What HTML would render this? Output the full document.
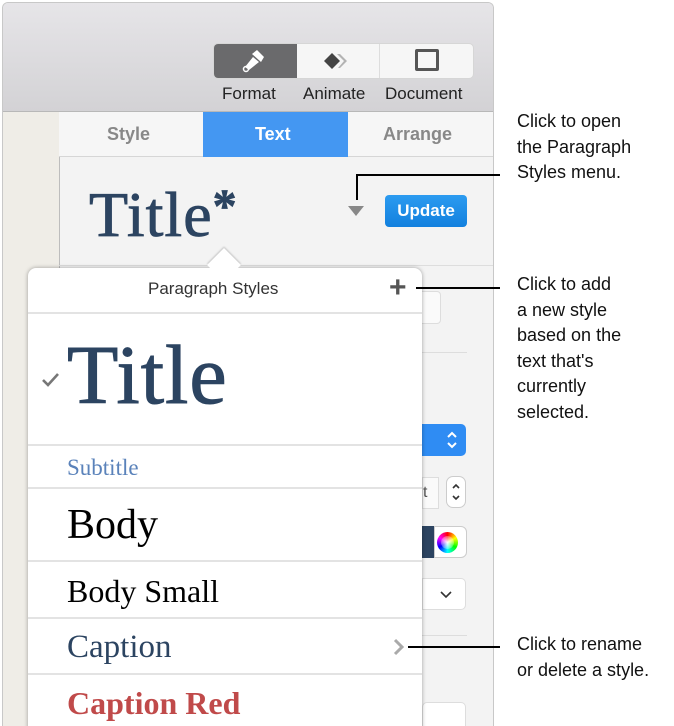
<!DOCTYPE html>
<html><head><style>
*{margin:0;padding:0;box-sizing:border-box}
html,body{width:674px;height:726px;overflow:hidden}
body{background:#fff;position:relative;font-family:"Liberation Sans",sans-serif}
.a{position:absolute}
.serif{font-family:"Liberation Serif",serif}
.note{font-size:18px;line-height:25.5px;color:#111}
.sep{position:absolute;left:28px;width:394px;height:2px;background:#e3e3e3}
</style></head><body>
<div class="a" style="left:2px;top:2px;width:492px;height:724px;border:1px solid #c8c8c8;border-bottom:none;border-radius:6px 6px 0 0;background:#f3f3f3;overflow:hidden">
 <div class="a" style="left:0;top:0;width:492px;height:109px;background:linear-gradient(#e6e5e8,#d3d2d5);border-bottom:1px solid #b8b8b8"></div>
 <div class="a" style="left:0;top:109px;width:57px;height:620px;background:#efede7;border-right:1px solid #bdbdbd"></div>
</div>
<div class="a" style="left:213px;top:43px;width:261px;height:36px;border-radius:5px;background:#f6f6f6;border:1px solid #d6d6d6;overflow:hidden">
 <div class="a" style="left:0;top:0;width:83px;height:36px;background:#6a6a6c"></div>
 <div class="a" style="left:165px;top:0;width:1px;height:36px;background:#ddd"></div>
</div>
<svg class="a" style="left:240px;top:48px" width="30" height="26" viewBox="0 0 30 26"><path d="M12 6 L17 2 L24 9 L21 14 Z" fill="#fff"/><path d="M13 9 L19 14 L9 22 L5 19 Z" fill="#fff"/><circle cx="6" cy="21" r="2.5" fill="none" stroke="#fff" stroke-width="1.5"/></svg>
<svg class="a" style="left:322px;top:50px" width="32" height="22"><path d="M2 11 L10 3 L18 11 L10 19Z" fill="#444"/><path d="M18 4 L25 11 L18 18 L16 18 L22 11 L15 4Z" fill="#b3b3b3"/></svg>
<div class="a" style="left:415px;top:49px;width:24px;height:22px;border:3px solid #555;border-radius:2px"></div>
<div class="a" style="left:222px;top:84px;font-size:17px;color:#222">Format</div>
<div class="a" style="left:303px;top:84px;font-size:17px;color:#222">Animate</div>
<div class="a" style="left:385px;top:84px;font-size:17px;color:#222">Document</div>
<div class="a" style="left:59px;top:112px;width:434px;height:45px;background:#f6f6f6;border-bottom:1px solid #d6d6d6"></div>
<div class="a" style="left:203px;top:112px;width:145px;height:45px;background:#4497f2"></div>
<div class="a" style="left:107px;top:124px;font-size:18px;font-weight:bold;color:#888">Style</div>
<div class="a" style="left:255px;top:124px;font-size:18px;font-weight:bold;color:#fff">Text</div>
<div class="a" style="left:383px;top:124px;font-size:18px;font-weight:bold;color:#888">Arrange</div>
<div class="a serif" style="left:89px;top:170px;font-size:64px;color:#2c4461;line-height:74px;letter-spacing:1px;-webkit-text-stroke:0.8px #2c4461">Title<span style="font-size:48px;vertical-align:14px;font-weight:bold">*</span></div>
<div class="a" style="left:348px;top:206px;width:0;height:0;border-left:8px solid transparent;border-right:8px solid transparent;border-top:10px solid #888"></div>
<div class="a" style="left:385px;top:195px;width:82px;height:32px;border-radius:4px;background:linear-gradient(#2c9bf0,#1280de);color:#fff;font-weight:bold;font-size:17px;text-align:center;line-height:32px">Update</div>
<div class="a" style="left:59px;top:265px;width:434px;height:1px;background:#ddd"></div>
<div class="a" style="left:415px;top:291px;width:26px;height:33px;border:1px solid #ddd;border-radius:4px;background:#fafafa"></div>
<div class="a" style="left:422px;top:352px;width:45px;height:1px;background:#ddd"></div>
<div class="a" style="left:422px;top:424px;width:44px;height:32px;border-radius:0 5px 5px 0;background:#2f8cf3"></div>
<svg class="a" style="left:444px;top:428px" width="16" height="24"><path d="M4 9 L8 5 L12 9 M4 15 L8 19 L12 15" stroke="#fff" stroke-width="2" fill="none"/></svg>
<div class="a" style="left:422px;top:477px;width:17px;height:32px;border:1px solid #ddd;background:#fafafa;font-size:16px;line-height:30px;color:#555">t</div>
<div class="a" style="left:446px;top:476px;width:20px;height:32px;border:1px solid #ccc;border-radius:7px;background:#fff"></div>
<svg class="a" style="left:448px;top:480px" width="16" height="24"><path d="M5 8 L8 5 L11 8 M5 16 L8 19 L11 16" stroke="#333" stroke-width="1.6" fill="none"/></svg>
<div class="a" style="left:422px;top:526px;width:12px;height:32px;background:#2c4461"></div>
<div class="a" style="left:434px;top:526px;width:33px;height:32px;border:1px solid #ccc;border-radius:0 6px 6px 0;background:#fff"></div>
<div class="a" style="left:437px;top:532px;width:21px;height:21px;border-radius:50%;background:conic-gradient(red,yellow,lime,cyan,blue,magenta,red)"></div>
<div class="a" style="left:441px;top:536px;width:13px;height:13px;border-radius:50%;background:radial-gradient(#fff,rgba(255,255,255,0))"></div>
<div class="a" style="left:422px;top:578px;width:44px;height:32px;border:1px solid #ddd;border-radius:0 5px 5px 0;background:#fff"></div>
<svg class="a" style="left:438px;top:586px" width="16" height="16"><path d="M3 6 L8 11 L13 6" stroke="#333" stroke-width="1.6" fill="none"/></svg>
<div class="a" style="left:422px;top:635px;width:45px;height:1px;background:#ddd"></div>
<div class="a" style="left:422px;top:702px;width:44px;height:30px;border:1px solid #ddd;border-radius:5px;background:#fff"></div>
<div class="a" style="left:28px;top:268px;width:394px;height:470px;background:#fff;border-radius:8px 8px 0 0;box-shadow:0 0 4px rgba(0,0,0,.35)"></div>
<div class="a" style="left:212px;top:253px;width:24px;height:24px;background:#fff;transform:rotate(45deg);box-shadow:-1px -1px 2px rgba(0,0,0,.2)"></div>
<div class="a" style="left:200px;top:268px;width:50px;height:12px;background:#fff"></div>
<div class="a" style="left:148px;top:279px;font-size:17px;color:#333">Paragraph Styles</div>
<div class="a" style="left:389px;top:270px;font-size:30px;color:#555;line-height:36px;font-weight:bold">+</div>
<div class="sep" style="top:312px"></div>
<svg class="a" style="left:41px;top:372px" width="20" height="16"><path d="M2 8 L7 13 L17 2" stroke="#777" stroke-width="2.6" fill="none"/></svg>
<div class="a serif" style="left:67px;top:328px;font-size:84px;color:#2c4461;line-height:96px;letter-spacing:1px;-webkit-text-stroke:1px #2c4461">Title</div>
<div class="sep" style="top:444px"></div>
<div class="a serif" style="left:67px;top:455px;font-size:23px;color:#5a82ba">Subtitle</div>
<div class="sep" style="top:487px"></div>
<div class="a serif" style="left:67px;top:501px;font-size:42px;color:#000;line-height:48px">Body</div>
<div class="sep" style="top:560px"></div>
<div class="a serif" style="left:67px;top:572px;font-size:32px;color:#000;line-height:38px">Body Small</div>
<div class="sep" style="top:617px"></div>
<div class="a serif" style="left:67px;top:628px;font-size:33px;color:#2c4461;line-height:38px">Caption</div>
<svg class="a" style="left:393px;top:638px" width="12" height="18"><path d="M2 2 L9 9 L2 16" stroke="#aaa" stroke-width="3" fill="none"/></svg>
<div class="sep" style="top:673px"></div>
<div class="a serif" style="left:67px;top:684px;font-size:32px;font-weight:bold;color:#c04a4a;line-height:38px">Caption Red</div>
<div class="a" style="left:356px;top:174px;width:2px;height:26px;background:#000"></div>
<div class="a" style="left:356px;top:174px;width:144px;height:2px;background:#000"></div>
<div class="a" style="left:416px;top:287px;width:84px;height:2px;background:#000"></div>
<div class="a" style="left:408px;top:646px;width:92px;height:2px;background:#000"></div>
<div class="a note" style="left:517px;top:109px">Click to open<br>the Paragraph<br>Styles menu.</div>
<div class="a note" style="left:517px;top:272px">Click to add<br>a new style<br>based on the<br>text that's<br>currently<br>selected.</div>
<div class="a note" style="left:517px;top:632px">Click to rename<br>or delete a style.</div>
</body></html>
